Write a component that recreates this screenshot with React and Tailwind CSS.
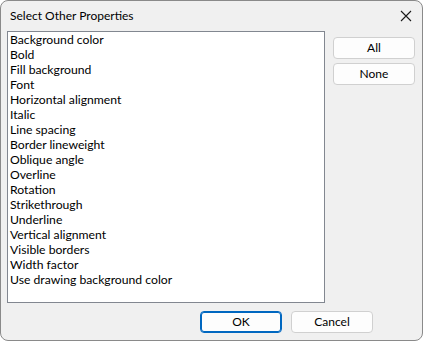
const ITEMS = [
  'Background color',
  'Bold',
  'Fill background',
  'Font',
  'Horizontal alignment',
  'Italic',
  'Line spacing',
  'Border lineweight',
  'Oblique angle',
  'Overline',
  'Rotation',
  'Strikethrough',
  'Underline',
  'Vertical alignment',
  'Visible borders',
  'Width factor',
  'Use drawing background color',
]

function Btn({ children, primary }) {
  return (
    <button
      className={
        'h-[22px] w-[82px] rounded-[4px] bg-[#fdfdfd] text-[12px] text-black ' +
        (primary ? 'border border-[#0067c0] shadow-[inset_0_0_0_1px_#0067c0]' : 'border border-[#d0d0d0]')
      }
    >
      {children}
    </button>
  )
}

export default function App() {
  return (
    <div className="h-[341px] w-[423px] overflow-hidden rounded-[8px] border border-[#8a8a8a] bg-[#f0f0f0] font-['Lato','Noto_Sans',sans-serif] text-[12px] text-black">
      <div className="flex h-[30px] items-center justify-between pl-[9px] pr-[8px]">
        <span className="text-[12px]">Select Other Properties</span>
        <svg width="12" height="12" viewBox="0 0 12 12" className="mr-[2px]">
          <path d="M1 1 L11 11 M11 1 L1 11" stroke="#1a1a1a" strokeWidth="1.1" />
        </svg>
      </div>
      <div className="flex gap-[8px] pl-[6px]">
        <div className="h-[272px] w-[318px] border border-[#828790] bg-white pl-[2px]">
          {ITEMS.map(t => (
            <div key={t} className="h-[15px] text-[12.2px] leading-[15px]">{t}</div>
          ))}
        </div>
        <div className="flex flex-col gap-[4px] pt-[6px]">
          <Btn>All</Btn>
          <Btn>None</Btn>
        </div>
      </div>
      <div className="flex gap-[9px] pl-[199px] pt-[8px]">
        <Btn primary>OK</Btn>
        <Btn>Cancel</Btn>
      </div>
    </div>
  )
}
